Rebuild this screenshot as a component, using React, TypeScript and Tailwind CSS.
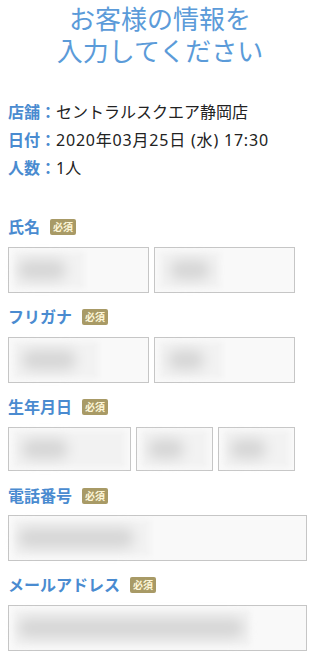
import React from 'react';

const Badge: React.FC = () => (
  <span className="ml-[10px] inline-flex h-[16px] w-[26px] items-center justify-center rounded-[2px] bg-[#a89a66] text-[10px] font-bold leading-none text-[#fdf6d8]">
    必須
  </span>
);

const Label: React.FC<{ text: string }> = ({ text }) => (
  <div className="flex h-[24px] items-center">
    <span className="text-[16px] font-bold leading-[24px] text-[#4a8bd0]">{text}</span>
    <Badge />
  </div>
);

// blurred placeholder content inside a box
const Field: React.FC<{ box: string; blob: string; dark: string }> = ({ box, blob, dark }) => (
  <div className={`flex items-center border border-[#c6c6c6] bg-[#f9f9f9] px-[5px] ${box}`}>
    <div className={`flex h-[36px] items-center bg-[#f2f2f2] blur-[2px] ${blob}`}>
      <div className={`h-[20px] rounded-full bg-[#d6d6d6] blur-[6px] ${dark}`} />
    </div>
  </div>
);

const App: React.FC = () => {
  return (
    <div className="min-h-[653px] w-[320px] bg-white font-['Noto_Sans','Noto_Sans_CJK_JP',sans-serif] text-[#222]">
      <h1 className="pt-[2px] text-center font-['Noto_Sans_CJK_JP',sans-serif] text-[26px] font-normal leading-[32px] text-[#5b9bd9]">
        お客様の情報を
        <br />
        入力してください
      </h1>

      <div className="mt-[32px] px-[8px] text-[16px] leading-[28px]">
        <p>
          <span className="font-bold text-[#4a8bd0]">店舗：</span>セントラルスクエア静岡店
        </p>
        <p>
          <span className="font-bold text-[#4a8bd0]">日付：</span>
          <span className="tracking-[0.8px]">2020年03月25日 (水) 17:30</span>
        </p>
        <p>
          <span className="font-bold text-[#4a8bd0]">人数：</span>1人
        </p>
      </div>

      <div className="mt-[33px] px-[8px]">
        <Label text="氏名" />
        <div className="mt-[8px] flex gap-[5px]">
          <Field box="h-[46px] w-[141px]" blob="w-[70px]" dark="ml-[4px] w-[48px]" />
          <Field box="h-[46px] w-[141px]" blob="w-[60px]" dark="ml-[10px] w-[40px]" />
        </div>

        <div className="mt-[12px]">
          <Label text="フリガナ" />
        </div>
        <div className="mt-[8px] flex gap-[5px]">
          <Field box="h-[46px] w-[141px]" blob="w-[84px]" dark="ml-[8px] w-[54px]" />
          <Field box="h-[46px] w-[141px]" blob="w-[62px]" dark="ml-[8px] w-[36px]" />
        </div>

        <div className="mt-[12px]">
          <Label text="生年月日" />
        </div>
        <div className="mt-[8px] flex gap-[5px]">
          <Field box="h-[44px] w-[123px]" blob="w-[113px]" dark="ml-[8px] w-[46px]" />
          <Field box="h-[44px] w-[77px]" blob="w-[67px]" dark="ml-[6px] w-[36px]" />
          <Field box="h-[44px] w-[77px]" blob="w-[67px]" dark="ml-[6px] w-[36px]" />
        </div>

        <div className="mt-[13px]">
          <Label text="電話番号" />
        </div>
        <div className="mt-[7px]">
          <Field box="h-[46px] w-[299px]" blob="w-[136px]" dark="ml-[4px] w-[116px]" />
        </div>

        <div className="mt-[12px]">
          <Label text="メールアドレス" />
        </div>
        <div className="mt-[8px]">
          <Field box="h-[46px] w-[299px]" blob="w-[236px]" dark="ml-[4px] w-[226px]" />
        </div>
      </div>
    </div>
  );
};

export default App;
